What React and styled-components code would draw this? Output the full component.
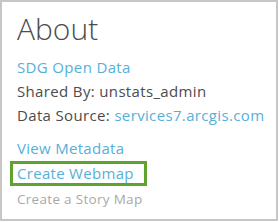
import React from "react";
import styled, { createGlobalStyle } from "styled-components";

const GlobalStyle = createGlobalStyle`
    body {
        margin: 0;
        background: #fff;
        font-family: "Open Sans", "Lato", sans-serif;
    }
`;

export default function App() {
    return (
        <>
            <GlobalStyle />
            <Panel>
                <Title>About</Title>
                <Details>
                    <Link href="#">SDG Open Data</Link>
                    <Line>Shared By: unstats_admin</Line>
                    <Line>
                        Data Source: <Link href="#">services7.arcgis.com</Link>
                    </Line>
                </Details>
                <Actions>
                    <Action href="#">View Metadata</Action>
                    <Action href="#" highlighted>
                        Create Webmap
                    </Action>
                    <Action href="#" muted>
                        Create a Story Map
                    </Action>
                </Actions>
            </Panel>
        </>
    );
}

const Panel = styled.div`
    box-sizing: border-box;
    width: 278px;
    height: 221px;
    border: 2px solid #c6c6c6;
    padding: 8px 0 0 15px;
    display: flex;
    flex-direction: column;
`;

const Title = styled.h1`
    margin: 0;
    font-family: "Open Sans", sans-serif;
    font-weight: 300;
    font-size: 30px;
    line-height: 38px;
    color: #4c4c4c;
`;

const Details = styled.div`
    display: flex;
    flex-direction: column;
    margin-top: 7px;
    font-size: 15px;
    line-height: 24px;
    color: #4c4c4c;
    letter-spacing: 0.35px;
`;

const Line = styled.div`
    white-space: nowrap;
`;

const Link = styled.a`
    color: #56b0d8;
    text-decoration: none;
    white-space: nowrap;
`;

const Actions = styled.div`
    display: flex;
    flex-direction: column;
    align-items: flex-start;
    margin-top: 9px;
    margin-left: -7px;
    letter-spacing: 0.3px;
`;

const Action = styled.a`
    display: block;
    box-sizing: border-box;
    padding: 0 4px;
    border: 3px solid ${({ highlighted }) => (highlighted ? "#5ea32d" : "transparent")};
    color: ${({ muted }) => (muted ? "#a9a9a9" : "#56b0d8")};
    font-size: ${({ muted }) => (muted ? "13.5px" : "15px")};
    line-height: 19px;
    margin-top: ${({ muted }) => (muted ? "1px" : "0")};
    text-decoration: none;
    white-space: nowrap;
    width: ${({ highlighted }) => (highlighted ? "137px" : "auto")};
`;
